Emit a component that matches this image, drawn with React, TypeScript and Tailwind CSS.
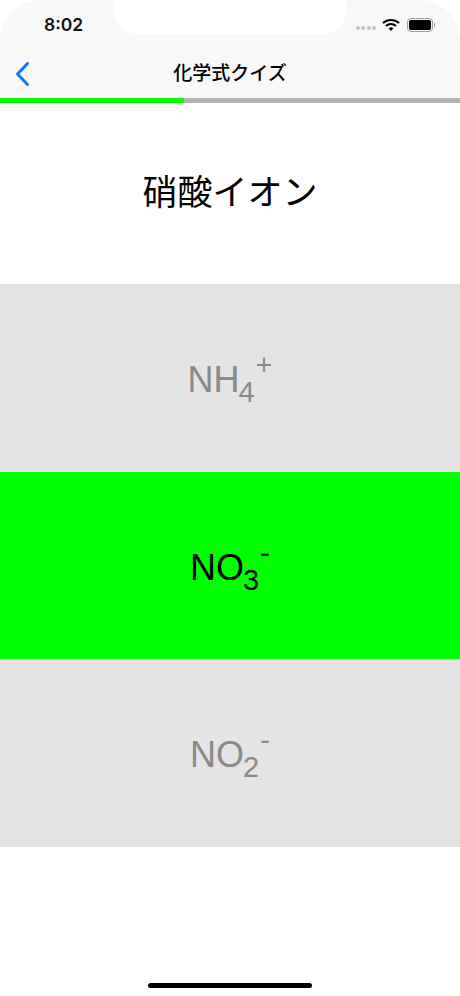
const SANS = "font-['Liberation_Sans','Noto_Sans_CJK_JP',sans-serif]";

function Formula({
  base,
  sub,
  sup,
  dark,
}: {
  base: string;
  sub: string;
  sup: string;
  dark?: boolean;
}) {
  return (
    <div className={`flex items-start pt-[12px] text-[36px] leading-[42px] ${dark ? "text-black" : "text-[#8a8a8a]"}`}>
      <span>{base}</span>
      <span className="ml-[-1px] mt-[16px] text-[29px] leading-[34px]">{sub}</span>
      <span className="ml-[1px] mt-[-11px] text-[29px] leading-[34px]">{sup}</span>
    </div>
  );
}

function Choice({
  base,
  sub,
  sup,
  correct,
  height,
}: {
  base: string;
  sub: string;
  sup: string;
  correct?: boolean;
  height: string;
}) {
  return (
    <div className={`flex items-center justify-center ${height} ${correct ? "bg-[#00ff00]" : "bg-[#e4e4e4]"}`}>
      <Formula base={base} sub={sub} sup={sup} dark={correct} />
    </div>
  );
}

function StatusIcons() {
  return (
    <div className="flex items-center">
      <div className="mr-[6px] mt-[5px] flex gap-[1.5px]">
        <span className="size-[4px] rounded-full bg-[#c4c4c4]" />
        <span className="size-[4px] rounded-full bg-[#c4c4c4]" />
        <span className="size-[4px] rounded-full bg-[#c4c4c4]" />
        <span className="size-[4px] rounded-full bg-[#c4c4c4]" />
      </div>
      <svg width="18" height="14" viewBox="0 0 19 14" className="mr-[7px]">
        <path d="M1 5 A12.5 12.5 0 0 1 18 5" fill="none" stroke="#000" strokeWidth="2.2" />
        <path d="M4.2 8 A8 8 0 0 1 14.8 8" fill="none" stroke="#000" strokeWidth="2.2" />
        <path d="M7 10.6 A3.6 3.6 0 0 1 12 10.6 L9.5 13.4 Z" fill="#000" />
      </svg>
      <div className="flex h-[14px] w-[26px] items-center justify-center rounded-[4px] border border-[#9a9a9a]">
        <div className="h-[10px] w-[22px] rounded-[2px] bg-black" />
      </div>
      <div className="ml-[1px] h-[4px] w-[1px] bg-[#9a9a9a]" />
    </div>
  );
}

export default function App() {
  return (
    <div className={`relative h-[996px] w-[460px] overflow-hidden bg-white ${SANS}`}>
      <header className="h-[98px] rounded-t-[40px] bg-[#f8f8f8]">
        <div className="flex h-[50px] items-center justify-between pl-[44px] pr-[25px]">
          <span className="font-['Inter',sans-serif] text-[17.5px] font-semibold leading-none text-[#111]">8:02</span>
          <StatusIcons />
        </div>
        <div className="relative flex h-[48px] items-center justify-center">
          <svg width="16" height="26" viewBox="0 0 16 26" className="absolute left-[14px] top-[11px]">
            <path d="M13.5 2.5 L3.5 13 L13.5 23.5" fill="none" stroke="#0a7aff" strokeWidth="3" strokeLinecap="round" strokeLinejoin="round" />
          </svg>
          <h1 className="text-[19px] font-medium leading-[24px] text-black">化学式クイズ</h1>
        </div>
      </header>
      {/* notch */}
      <div className="absolute left-[113px] top-0 h-[34px] w-[234px] rounded-b-[26px] bg-white" />

      <div className="h-[5px] bg-[#b4b4b4]">
        <div className="h-full w-[184px] bg-[#00ff00]" />
      </div>

      <div className="flex h-[181px] items-center justify-center text-[35px] text-black">硝酸イオン</div>

      <Choice base="NH" sub="4" sup="+" height="h-[188px]" />
      <Choice base="NO" sub="3" sup="-" correct height="h-[187px]" />
      <Choice base="NO" sub="2" sup="-" height="h-[188px]" />

      <div className="absolute bottom-[8px] left-[148px] h-[5px] w-[164px] rounded-full bg-black" />
    </div>
  );
}
